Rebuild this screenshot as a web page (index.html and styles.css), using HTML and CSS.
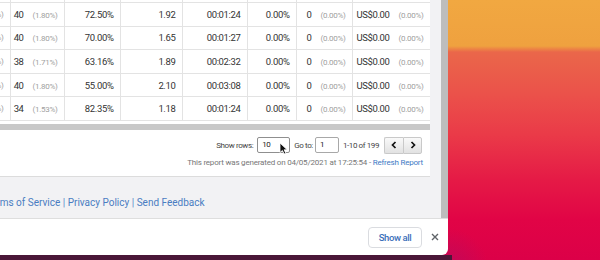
FILE: index.html
```html
<!DOCTYPE html>
<html lang="en">
<head>
    <meta charset="UTF-8">
    <title>Audience Report</title>
    <link rel="stylesheet" href="styles.css">
</head>
<body>
    <div class="window">
        <div class="viewport">
            <div class="page">
                <div class="card">
                    <table class="report">
                        <colgroup>
                            <col style="width: 10px">
                            <col style="width: 54px">
                            <col style="width: 56px">
                            <col style="width: 62px">
                            <col style="width: 65px">
                            <col style="width: 49px">
                            <col style="width: 56px">
                            <col style="width: 78px">
                        </colgroup>
                        <tr class="cut">
                            <td></td><td></td><td></td><td></td><td></td><td></td><td></td><td></td>
                        </tr>
                        <tr>
                            <td><div class="clip"><span class="pct">(1.85%)</span></div></td>
                            <td>40<span class="pct">(1.80%)</span></td>
                            <td>72.50%</td>
                            <td>1.92</td>
                            <td>00:01:24</td>
                            <td>0.00%</td>
                            <td>0<span class="pct">(0.00%)</span></td>
                            <td>US$0.00<span class="pct">(0.00%)</span></td>
                        </tr>
                        <tr>
                            <td><div class="clip"><span class="pct">(1.85%)</span></div></td>
                            <td>40<span class="pct">(1.80%)</span></td>
                            <td>70.00%</td>
                            <td>1.65</td>
                            <td>00:01:27</td>
                            <td>0.00%</td>
                            <td>0<span class="pct">(0.00%)</span></td>
                            <td>US$0.00<span class="pct">(0.00%)</span></td>
                        </tr>
                        <tr>
                            <td><div class="clip"><span class="pct">(1.75%)</span></div></td>
                            <td>38<span class="pct">(1.71%)</span></td>
                            <td>63.16%</td>
                            <td>1.89</td>
                            <td>00:02:32</td>
                            <td>0.00%</td>
                            <td>0<span class="pct">(0.00%)</span></td>
                            <td>US$0.00<span class="pct">(0.00%)</span></td>
                        </tr>
                        <tr>
                            <td><div class="clip"><span class="pct">(1.85%)</span></div></td>
                            <td>40<span class="pct">(1.80%)</span></td>
                            <td>55.00%</td>
                            <td>2.10</td>
                            <td>00:03:08</td>
                            <td>0.00%</td>
                            <td>0<span class="pct">(0.00%)</span></td>
                            <td>US$0.00<span class="pct">(0.00%)</span></td>
                        </tr>
                        <tr>
                            <td><div class="clip"><span class="pct">(1.55%)</span></div></td>
                            <td>34<span class="pct">(1.53%)</span></td>
                            <td>82.35%</td>
                            <td>1.18</td>
                            <td>00:01:24</td>
                            <td>0.00%</td>
                            <td>0<span class="pct">(0.00%)</span></td>
                            <td>US$0.00<span class="pct">(0.00%)</span></td>
                        </tr>
                    </table>

                    <div class="hscroll"></div>

                    <div class="controls">
                        <span>Show rows:</span>
                        <div class="select">
                            10
                            <svg class="pointer" width="9" height="13" viewBox="0 0 9 13">
                                <path d="M1 1 L1 10.5 L3.4 8.4 L5.2 12 L6.8 11.2 L5.1 7.8 L8.2 7.8 Z" fill="#111" stroke="#fff" stroke-width="0.8"/>
                            </svg>
                        </div>
                        <span class="goto">Go to:</span>
                        <div class="field">1</div>
                        <span>1-10 of 199</span>
                        <div class="pager">
                            <button>
                                <svg width="6" height="8" viewBox="0 0 6 8"><polyline points="4.5,1 1.5,4 4.5,7" fill="none" stroke="#111" stroke-width="1.7"/></svg>
                            </button>
                            <button>
                                <svg width="6" height="8" viewBox="0 0 6 8"><polyline points="1.5,1 4.5,4 1.5,7" fill="none" stroke="#111" stroke-width="1.7"/></svg>
                            </button>
                        </div>
                    </div>

                    <div class="generated">
                        This report was generated on 04/05/2021 at 17:25:54 - <a href="#">Refresh Report</a>
                    </div>
                </div>

                <div class="footer">
                    <a href="#">Terms of Service</a> | <a href="#">Privacy Policy</a> | <a href="#">Send Feedback</a>
                </div>
            </div>
            <div class="vscroll"></div>
        </div>

        <div class="downloads">
            <button class="show-all">Show all</button>
            <svg class="close" width="8" height="8" viewBox="0 0 8 8">
                <path d="M1 1 L7 7 M7 1 L1 7" stroke="#5f6368" stroke-width="1.4"/>
            </svg>
        </div>
    </div>
</body>
</html>
```

FILE: styles.css
```css
body {
    margin: 0;
    width: 600px;
    height: 260px;
    overflow: hidden;
    font-family: Roboto, "Liberation Sans", sans-serif;
    background:
        linear-gradient(#4a1738, #4a1738) 0 255px / 452px 5px no-repeat,
        radial-gradient(circle at 448px 268px, rgba(160, 20, 110, 0.45), rgba(160, 20, 110, 0) 40px),
        linear-gradient(to bottom, #f1a841 0, #efa13f 46px, #ea674a 52px, #eb514a 95px, #ea3a48 135px, #e51a46 180px, #e10446 220px, #dc0048 260px);
}

.window {
    width: 448px;
    height: 255px;
    background: #fff;
    border-bottom-right-radius: 6px;
    overflow: hidden;
    display: flex;
    flex-direction: column;
}

.viewport {
    height: 218px;
    display: flex;
    border-bottom: 1px solid #dedede;
}

.page {
    flex: 1;
    background: #f2f2f4;
    display: flex;
    flex-direction: column;
    min-width: 0;
}

.vscroll {
    width: 7px;
    background: #bdbdbd;
}

.card {
    width: 430px;
    height: 176px;
    background: #fff;
    border-bottom: 1px solid #dcdcdc;
    overflow: hidden;
}

.report {
    width: 430px;
    table-layout: fixed;
    border-collapse: collapse;
    font-size: 9.5px;
    letter-spacing: -0.35px;
    color: #333;
}

.report td {
    height: 22.6px;
    padding: 0 6px 0 0;
    text-align: right;
    white-space: nowrap;
    overflow: hidden;
    border-right: 1px solid #e3e3e3;
    border-bottom: 1px solid #e3e3e3;
}

.report tr.cut td {
    height: 2px;
}

.report .clip {
    display: flex;
    justify-content: flex-end;
    overflow: hidden;
}

.report .pct {
    margin-left: 9px;
    font-size: 8px;
    letter-spacing: -0.3px;
    color: #a0a0a0;
}

.report .clip .pct {
    margin-left: 0;
    flex-shrink: 0;
}

.hscroll {
    height: 6px;
    margin-top: 3px;
    background: #c8c8c8;
}

.controls {
    display: flex;
    justify-content: flex-end;
    align-items: center;
    gap: 4px;
    margin-top: 7px;
    padding-right: 8px;
    font-size: 8px;
    letter-spacing: -0.4px;
    color: #444;
}

.select, .field {
    height: 14px;
    line-height: 14px;
    border: 1px solid #8f8f8f;
    border-radius: 2px;
    padding-left: 4px;
    box-sizing: content-box;
    color: #222;
}

.select {
    width: 27px;
    position: relative;
}

.select .pointer {
    position: absolute;
    left: 21px;
    top: 4px;
}

.goto {
    margin-right: -2px;
}

.field {
    width: 18px;
    border-color: #a8a8a8;
}

.pager {
    display: flex;
    margin-left: 1px;
}

.pager button {
    width: 19px;
    height: 17px;
    padding: 0;
    display: flex;
    align-items: center;
    justify-content: center;
    background: linear-gradient(#f9f9f9, #e2e2e2);
    border: 1px solid #c9c9c9;
}

.pager button:first-child {
    border-radius: 2px 0 0 2px;
    border-right: none;
}

.pager button:last-child {
    border-radius: 0 2px 2px 0;
}

.generated {
    margin-top: 4px;
    padding-right: 7px;
    text-align: right;
    font-size: 8px;
    letter-spacing: -0.2px;
    color: #777;
}

.generated a {
    color: #3e79c4;
    text-decoration: none;
}

.footer {
    height: 41px;
    box-sizing: border-box;
    padding-top: 20px;
    margin-left: -14.5px;
    line-height: 12px;
    font-size: 10px;
    color: #5a8ac8;
    white-space: nowrap;
}

.footer a {
    color: #4a7dc2;
    text-decoration: none;
}

.downloads {
    flex: 1;
    display: flex;
    justify-content: flex-end;
    align-items: center;
    gap: 9px;
    padding-right: 9px;
}

.show-all {
    width: 54px;
    height: 21px;
    padding: 0;
    background: #fff;
    border: 1px solid #dadce0;
    border-radius: 4px;
    font-family: Roboto, "Liberation Sans", sans-serif;
    font-size: 9.5px;
    font-weight: 500;
    letter-spacing: -0.4px;
    color: #3b6fba;
}

.close {
    display: block;
}
```
